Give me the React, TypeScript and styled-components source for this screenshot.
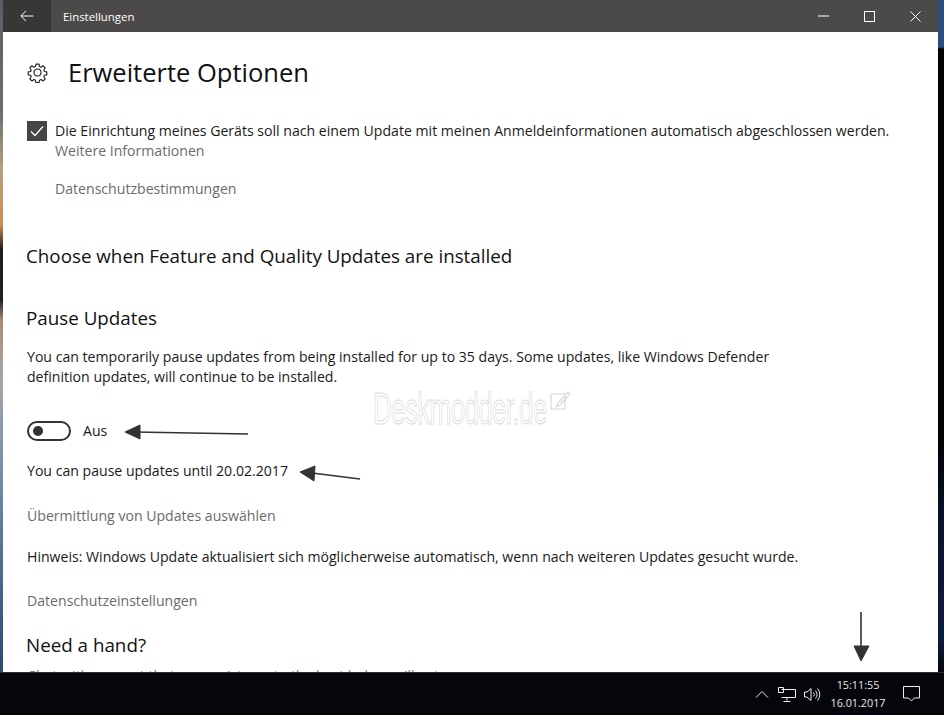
import React, { FC } from 'react'
import styled, { createGlobalStyle } from 'styled-components'

const GlobalStyle = createGlobalStyle`
    html, body {
        margin: 0;
        padding: 0;
        background: #05060b;
    }
    body {
        font-family: "Open Sans", "Noto Sans", sans-serif;
    }
`

const Screen = styled.div`
    position: relative;
    width: 944px;
    height: 715px;
    overflow: hidden;
    display: flex;
    flex-direction: column;
`

const Desktop = styled.div`
    display: flex;
    height: 672px;
`

const LeftEdge = styled.div`
    width: 3px;
    background: linear-gradient(180deg, #5a5f66 0, #6a6c70 110px, #b9a078 170px, #d08a4e 225px,
        #1b1a20 250px, #20202a 300px, #b08a70 320px, #a6a6aa 380px, #6f8bb0 480px, #3f5f90 600px, #2c4a78 672px);
`

const RightEdge = styled.div`
    width: 6px;
    background: linear-gradient(180deg, #2f4c80 0, #2f4c80 47px, #020205 49px, #020205 440px, #0a1630 540px, #0c1c3c 640px, #05060b 672px);
`

const Window = styled.div`
    width: 935px;
    display: flex;
    flex-direction: column;
    background: #fff;
    overflow: hidden;
`

const TitleBar = styled.div`
    flex: 0 0 32px;
    display: flex;
    align-items: center;
    background: #4c4a48;
    color: #fff;
    font-size: 12px;
`

const BackButton = styled.div`
    width: 48px;
    height: 32px;
    display: flex;
    align-items: center;
    justify-content: center;
    background: #393735;
`

const TitleText = styled.span`
    margin-left: 12px;
    flex: 1;
    font-size: 11.4px;
`

const WindowButton = styled.div`
    width: 46px;
    height: 32px;
    display: flex;
    align-items: center;
    justify-content: center;
`

const Content = styled.div`
    flex: 1;
    padding: 0 0 0 23px;
    color: #111;
    overflow: hidden;
`

const PageHeader = styled.div`
    display: flex;
    align-items: center;
    gap: 20px;
    margin: 20px 0 0 1px;
    height: 40px;
`

const PageTitle = styled.h1`
    margin: 0;
    font-size: 25.5px;
    font-weight: 400;
    line-height: 40px;
    color: #111;
`

const CheckRow = styled.div`
    display: flex;
    gap: 8px;
    margin: 29px 0 0 1px;
`

const CheckBox = styled.div`
    flex: 0 0 20px;
    height: 20px;
    background: #454545;
    display: flex;
    align-items: center;
    justify-content: center;
`

const Body = styled.p<{ $top?: number; $left?: number }>`
    margin: ${p => p.$top ?? 0}px 0 0 ${p => p.$left ?? 1}px;
    font-size: 14.1px;
    line-height: 20px;
    color: #1a1a1a;
    white-space: nowrap;
`

const LinkText = styled(Body)`
    color: #6b6b6b;
`

const Section = styled.h2<{ $top: number }>`
    margin: ${p => p.$top}px 0 0 0;
    font-size: 18.8px;
    line-height: 26px;
    font-weight: 400;
    color: #111;
    white-space: nowrap;
`

const ToggleRow = styled.div`
    display: flex;
    align-items: center;
    gap: 12px;
    margin: 34px 0 0 1px;
    height: 20px;
`

const Toggle = styled.div`
    box-sizing: border-box;
    width: 44px;
    height: 20px;
    border: 2px solid #333;
    border-radius: 10px;
    display: flex;
    align-items: center;
    padding-left: 4px;
`

const ToggleKnob = styled.div`
    width: 10px;
    height: 10px;
    border-radius: 50%;
    background: #333;
`

const ClippedText = styled(Body)`
    color: #777;
`

const Watermark = styled.div`
    position: absolute;
    left: 373px;
    top: 384px;
    display: flex;
    align-items: flex-start;
    font-family: "Liberation Sans", sans-serif;
    font-size: 45px;
    line-height: 50px;
    letter-spacing: -1px;
    color: #fff;
    -webkit-text-stroke: 1px #dcdcdc;
`

const WatermarkWord = styled.span`
    display: inline-block;
    transform: scaleX(0.575);
    transform-origin: left top;
    width: 177px;
    white-space: nowrap;
`

const WatermarkIcon = styled.svg`
    margin-top: 6px;
`

const Overlay = styled.svg`
    position: absolute;
    left: 0;
    top: 0;
    pointer-events: none;
`

const TaskBar = styled.div`
    flex: 1;
    display: flex;
    justify-content: flex-end;
    align-items: center;
    background: #05060b;
    color: #eee;
    border-top: 1px solid #2a2c33;
`

const Tray = styled.div`
    display: flex;
    align-items: center;
`

const TrayIcon = styled.div<{ $left?: number; $right?: number }>`
    display: flex;
    align-items: center;
    justify-content: center;
    margin-left: ${p => p.$left ?? 0}px;
    margin-right: ${p => p.$right ?? 0}px;
`

const Clock = styled.div`
    width: 60px;
    margin-left: 6px;
    text-align: center;
    font-size: 10.8px;
    line-height: 18px;
    color: #e8e8e8;
`

const GearIcon: FC = () => (
    <svg width="21" height="21" viewBox="0 0 24 24" fill="none" stroke="#222" strokeWidth="1.3" strokeLinejoin="round">
        <path d="M10.2 2.5h3.6l.5 2.7 1.7.7 2.3-1.6 2.5 2.5-1.6 2.3.7 1.7 2.7.5v3.4l-2.7.5-.7 1.7 1.6 2.3-2.5 2.5-2.3-1.6-1.7.7-.5 2.7h-3.6l-.5-2.7-1.7-.7-2.3 1.6-2.5-2.5 1.6-2.3-.7-1.7-2.7-.5v-3.4l2.7-.5.7-1.7-1.6-2.3 2.5-2.5 2.3 1.6 1.7-.7z" />
        <circle cx="12" cy="12" r="4" />
    </svg>
)

const App: FC = () => (
    <Screen>
        <GlobalStyle />
        <Desktop>
            <LeftEdge />
            <Window>
                <TitleBar>
                    <BackButton>
                        <svg width="14" height="12" viewBox="0 0 14 12" fill="none" stroke="#fff" strokeWidth="1">
                            <path d="M13.5 6H1M6 .8 .8 6 6 11.2" />
                        </svg>
                    </BackButton>
                    <TitleText>Einstellungen</TitleText>
                    <WindowButton>
                        <svg width="11" height="2" viewBox="0 0 11 2"><path d="M0 1h11" stroke="#fff" strokeWidth="1" /></svg>
                    </WindowButton>
                    <WindowButton>
                        <svg width="11" height="11" viewBox="0 0 11 11"><rect x=".5" y=".5" width="10" height="10" fill="none" stroke="#fff" /></svg>
                    </WindowButton>
                    <WindowButton>
                        <svg width="11" height="11" viewBox="0 0 11 11"><path d="M.5.5l10 10M10.5.5l-10 10" stroke="#fff" strokeWidth="1" /></svg>
                    </WindowButton>
                </TitleBar>
                <Content>
                    <PageHeader>
                        <GearIcon />
                        <PageTitle>Erweiterte Optionen</PageTitle>
                    </PageHeader>
                    <CheckRow>
                        <CheckBox>
                            <svg width="14" height="12" viewBox="0 0 14 12" fill="none" stroke="#fff" strokeWidth="1.3">
                                <path d="M1 6.500 5 10.500 13 1.500" />
                            </svg>
                        </CheckBox>
                        <div>
                            <Body $left={0}>Die Einrichtung meines Geräts soll nach einem Update mit meinen Anmeldeinformationen automatisch abgeschlossen werden.</Body>
                            <LinkText $left={0}>Weitere Informationen</LinkText>
                            <LinkText $left={0} $top={18}>Datenschutzbestimmungen</LinkText>
                        </div>
                    </CheckRow>
                    <Section $top={44}>Choose when Feature and Quality Updates are installed</Section>
                    <Section $top={36}>Pause Updates</Section>
                    <Body $top={16}>You can temporarily pause updates from being installed for up to 35 days. Some updates, like Windows Defender</Body>
                    <Body>definition updates, will continue to be installed.</Body>
                    <ToggleRow>
                        <Toggle><ToggleKnob /></Toggle>
                        <Body $left={0}>Aus</Body>
                    </ToggleRow>
                    <Body $top={20}>You can pause updates until 20.02.2017</Body>
                    <LinkText $top={25}>Übermittlung von Updates auswählen</LinkText>
                    <Body $top={21}>Hinweis: Windows Update aktualisiert sich möglicherweise automatisch, wenn nach weiteren Updates gesucht wurde.</Body>
                    <LinkText $top={24}>Datenschutzeinstellungen</LinkText>
                    <Section $top={21}>Need a hand?</Section>
                    <ClippedText $top={8}>Chat with support that can assist you to the best help you'll get</ClippedText>
                </Content>
            </Window>
            <RightEdge />
        </Desktop>
        <TaskBar>
            <Tray>
                <TrayIcon>
                    <svg width="14" height="8" viewBox="0 0 14 8" fill="none" stroke="#eee" strokeWidth="1"><path d="M1 7.500 7 1.500 13 7.500" /></svg>
                </TrayIcon>
                <TrayIcon $left={9}>
                    <svg width="18" height="15" viewBox="0 0 18 15" fill="none" stroke="#eee" strokeWidth="1">
                        <path d="M3.500 2.500h14v8h-14M9 10.500v3M5.500 14.500h7M.5.500h5v5h-5z" />
                    </svg>
                </TrayIcon>
                <TrayIcon $left={8}>
                    <svg width="18" height="15" viewBox="0 0 18 15" fill="none" stroke="#eee" strokeWidth="1">
                        <path d="M.5 5h2.500L7 1.500v12L3 10H.5zM9.500 5.500a3 3 0 0 1 0 4M11.500 3.500a6 6 0 0 1 0 8M13.500 1.500a9 9 0 0 1 0 12" />
                    </svg>
                </TrayIcon>
                <Clock>15:11:55<br />16.01.2017</Clock>
                <TrayIcon $left={15} $right={24}>
                    <svg width="17" height="16" viewBox="0 0 17 16" fill="none" stroke="#eee" strokeWidth="1">
                        <path d="M.5.5h16v11.500h-5l-3 3-3-3h-5z" />
                    </svg>
                </TrayIcon>
            </Tray>
        </TaskBar>
        <Watermark>
            <WatermarkWord>Deskmodder.de</WatermarkWord>
            <WatermarkIcon width="21" height="21" viewBox="0 0 21 21" fill="none" stroke="#d8d8d8" strokeWidth="1.2">
                <path d="M1 4h14v15H1zM18 2 8 13l-2 4 4-2L20 4z" />
            </WatermarkIcon>
        </Watermark>
        <Overlay width="944" height="715" viewBox="0 0 944 715">
            <g fill="#333" stroke="#333">
                <path d="M248 434 135 432" strokeWidth="1.6" />
                <path d="M125 432 140 425 140 439z" strokeWidth="1" />
                <path d="M360 479 312 473" strokeWidth="1.6" />
                <path d="M300 472 315 466 314 481z" strokeWidth="1" />
                <path d="M861 612 861 650" strokeWidth="1.6" />
                <path d="M861 661 854 646 869 646z" strokeWidth="1" />
            </g>
        </Overlay>
    </Screen>
)

export default App
